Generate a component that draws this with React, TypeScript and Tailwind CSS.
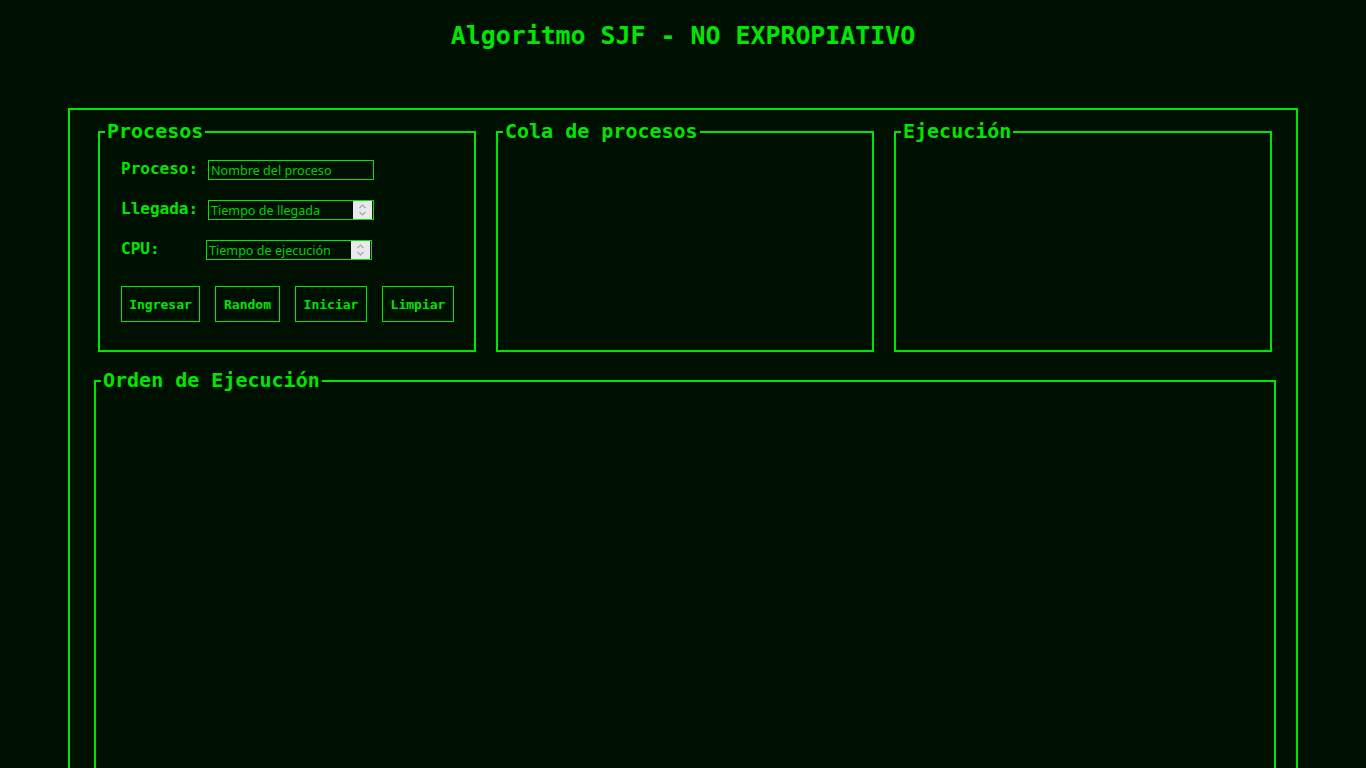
import type { ReactNode } from 'react';

const MONO = 'font-["DejaVu_Sans_Mono",monospace]';

function Box({ title, className, children }: { title: string; className?: string; children?: ReactNode }) {
  return (
    <fieldset className={`min-w-0 border-2 border-[#00e600] px-[5px] ${className ?? ''}`}>
      <legend className={`${MONO} px-[2px] text-[20px] font-bold leading-[23px] text-[#00e600]`}>{title}</legend>
      {children}
    </fieldset>
  );
}

function Spinner() {
  return (
    <span className="pointer-events-none absolute right-[2px] top-[1px] flex h-[18px] w-[19px] items-center justify-center bg-[#e9e9ed]">
      <svg width="9" height="14" viewBox="0 0 9 14" fill="none" stroke="#a3a3ab" strokeWidth="1.2">
        <path d="M1.5 5 L4.5 2 L7.5 5" />
        <path d="M1.5 9 L4.5 12 L7.5 9" />
      </svg>
    </span>
  );
}

function Field({ label, placeholder, number, shift }: { label: string; placeholder: string; number?: boolean; shift?: boolean }) {
  return (
    <div className="flex h-[20px] items-center">
      <label className={`${MONO} mb-[2px] text-[16px] font-bold text-[#00e600] ${shift ? 'w-[85px]' : 'w-[87px]'}`}>{label}</label>
      <div className="relative flex">
        <input
          type="text"
          placeholder={placeholder}
          className='block h-[20px] w-[166px] border border-[#00e600] bg-transparent px-[2px] font-["Noto_Sans",sans-serif] text-[12.6px] text-[#00e600] outline-none placeholder:text-[#00d000]'
        />
        {number && <Spinner />}
      </div>
    </div>
  );
}

function Btn({ children, w }: { children: ReactNode; w: string }) {
  return (
    <button className={`${MONO} ${w} h-[36px] border border-[#00e600] bg-transparent pt-[2px] text-[13px] font-bold text-[#00e600]`}>
      {children}
    </button>
  );
}

export default function App() {
  return (
    <div className="min-h-screen overflow-hidden bg-[#001000] pt-[21px]">
      <h1 className={`${MONO} text-center text-[24.9px] font-bold leading-[29px] text-[#00e600]`}>
        Algoritmo SJF - NO EXPROPIATIVO
      </h1>

      <div className="mx-[68px] mt-[58px] border-2 border-[#00e600] pb-[40px] pt-[10px]">
        <div className="flex gap-5 pl-[28px] pr-[24px]">
          <Box title="Procesos" className="h-[232px] flex-1">
            <div className="mt-[17px] flex flex-col gap-5 pl-[16px]">
              <Field label="Proceso:" placeholder="Nombre del proceso" />
              <Field label="Llegada:" placeholder="Tiempo de llegada" number />
              <Field label="CPU:" placeholder="Tiempo de ejecución" number shift />
              <div className="mt-[6px] flex gap-[15px]">
                <Btn w="w-[79px]">Ingresar</Btn>
                <Btn w="w-[65px]">Random</Btn>
                <Btn w="w-[72px]">Iniciar</Btn>
                <Btn w="w-[72px]">Limpiar</Btn>
              </div>
            </div>
          </Box>
          <Box title="Cola de procesos" className="h-[232px] flex-1" />
          <Box title="Ejecución" className="h-[232px] flex-1" />
        </div>

        <div className="mt-[17px] pl-[24px] pr-[20px]">
          <Box title="Orden de Ejecución" className="h-[440px]" />
        </div>
      </div>
    </div>
  );
}
